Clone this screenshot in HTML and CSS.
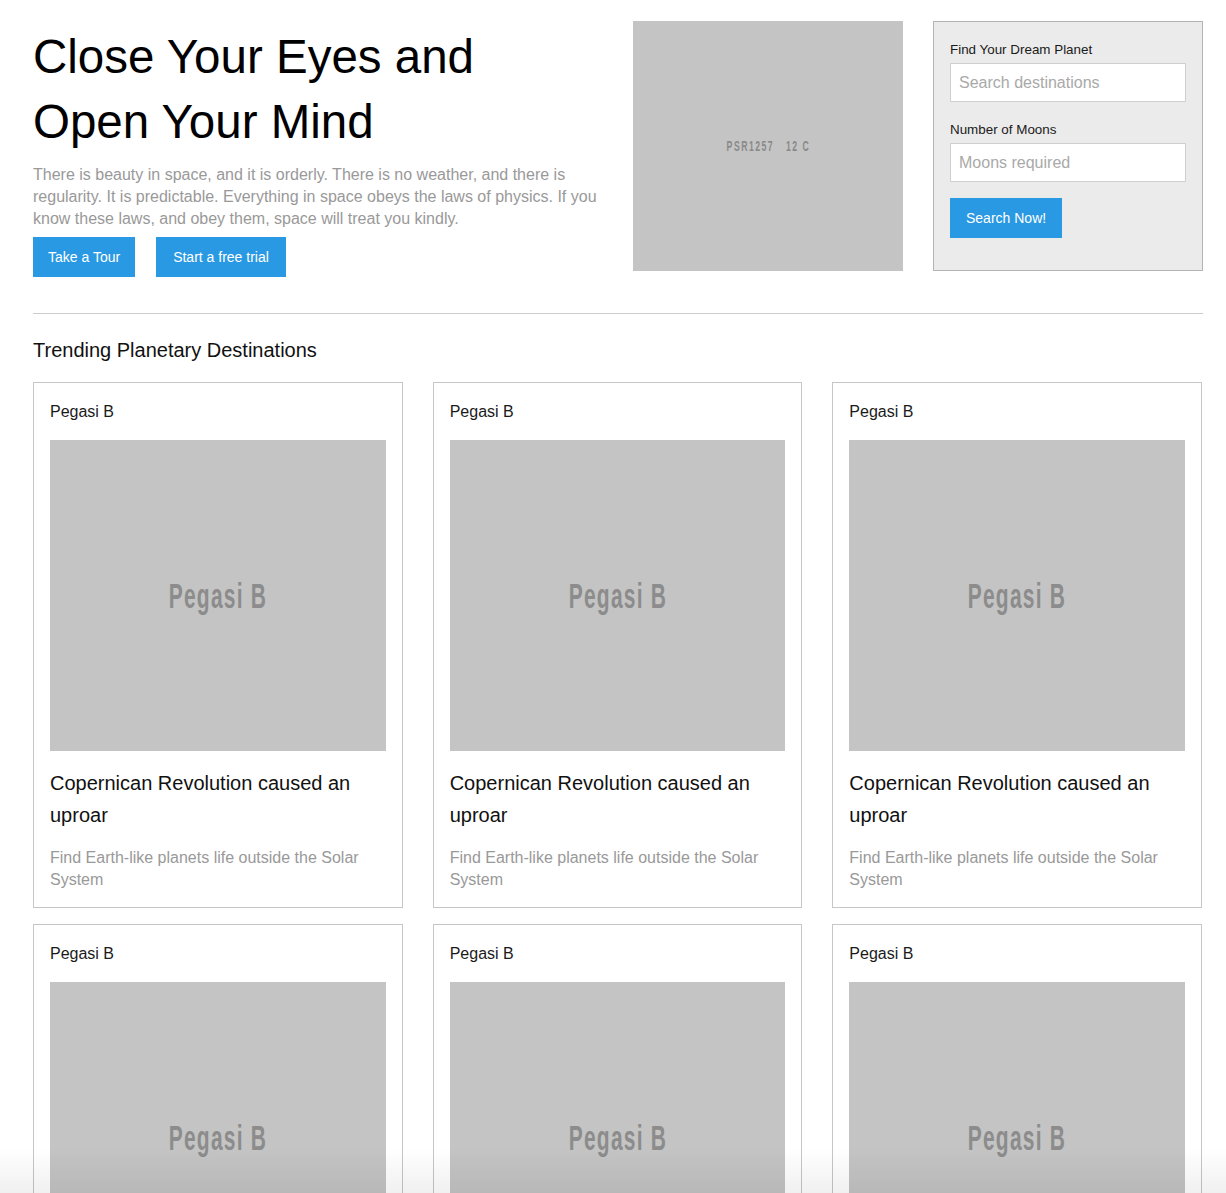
FILE: index.html
```html
<!DOCTYPE html>
<html lang="en">
<head>
<meta charset="utf-8">
<title>Close Your Eyes and Open Your Mind</title>
<link rel="stylesheet" href="styles.css">
</head>
<body>
<div class="page">
  <section class="hero">
    <div class="intro">
      <h1 class="hero-title">Close Your Eyes and<br>Open Your Mind</h1>
      <p class="hero-text">There is beauty in space, and it is orderly. There is no weather, and there is regularity. It is predictable. Everything in space obeys the laws of physics. If you know these laws, and obey them, space will treat you kindly.</p>
      <div class="actions">
        <a class="btn" href="#">Take a Tour</a>
        <a class="btn" href="#">Start a free trial</a>
      </div>
    </div>
    <div class="ph ph-hero"><span class="ph-label ph-label-small">PSR1257&nbsp;&nbsp;&nbsp;12 C</span></div>
    <form class="search">
      <label class="field-label" for="dest">Find Your Dream Planet</label>
      <input class="field" id="dest" type="text" placeholder="Search destinations">
      <label class="field-label" for="moons">Number of Moons</label>
      <input class="field field-last" id="moons" type="text" placeholder="Moons required">
      <button class="btn btn-search" type="button">Search Now!</button>
    </form>
  </section>

  <hr class="divider">

  <h2 class="section-title">Trending Planetary Destinations</h2>

  <div class="cards">
    <article class="card">
      <div class="card-name">Pegasi B</div>
      <div class="ph ph-card"><span class="ph-label">Pegasi B</span></div>
      <h3 class="card-title">Copernican Revolution caused an uproar</h3>
      <p class="card-text">Find Earth-like planets life outside the Solar System</p>
    </article>
    <article class="card">
      <div class="card-name">Pegasi B</div>
      <div class="ph ph-card"><span class="ph-label">Pegasi B</span></div>
      <h3 class="card-title">Copernican Revolution caused an uproar</h3>
      <p class="card-text">Find Earth-like planets life outside the Solar System</p>
    </article>
    <article class="card">
      <div class="card-name">Pegasi B</div>
      <div class="ph ph-card"><span class="ph-label">Pegasi B</span></div>
      <h3 class="card-title">Copernican Revolution caused an uproar</h3>
      <p class="card-text">Find Earth-like planets life outside the Solar System</p>
    </article>
    <article class="card">
      <div class="card-name">Pegasi B</div>
      <div class="ph ph-card"><span class="ph-label">Pegasi B</span></div>
      <h3 class="card-title">Copernican Revolution caused an uproar</h3>
      <p class="card-text">Find Earth-like planets life outside the Solar System</p>
    </article>
    <article class="card">
      <div class="card-name">Pegasi B</div>
      <div class="ph ph-card"><span class="ph-label">Pegasi B</span></div>
      <h3 class="card-title">Copernican Revolution caused an uproar</h3>
      <p class="card-text">Find Earth-like planets life outside the Solar System</p>
    </article>
    <article class="card">
      <div class="card-name">Pegasi B</div>
      <div class="ph ph-card"><span class="ph-label">Pegasi B</span></div>
      <h3 class="card-title">Copernican Revolution caused an uproar</h3>
      <p class="card-text">Find Earth-like planets life outside the Solar System</p>
    </article>
  </div>
</div>
<div class="fade"></div>
</body>
</html>
```

FILE: styles.css
```css
* { box-sizing: border-box; }

html, body {
  margin: 0;
  padding: 0;
  background: #fff;
}

body {
  font-family: "Liberation Sans", Arial, Helvetica, sans-serif;
  color: #111;
}

.page {
  width: 1170px;
  margin-left: 33px;
  padding-top: 21px;
}

.hero {
  display: grid;
  grid-template-columns: 570px 270px 270px;
  column-gap: 30px;
  align-items: start;
}

.hero-title {
  margin: 3px 0 0;
  font-size: 47.5px;
  line-height: 65px;
  font-weight: normal;
  color: #000;
}

.hero-text {
  margin: 10px 0 0;
  width: 576px;
  font-size: 16px;
  line-height: 22px;
  color: #999;
}

.actions {
  display: flex;
  gap: 21px;
  margin-top: 7px;
}

.btn {
  display: inline-flex;
  align-items: center;
  justify-content: center;
  height: 40px;
  padding: 0 15px;
  background: #2a99e3;
  color: #fff;
  font-family: inherit;
  font-size: 14px;
  text-decoration: none;
  border: 0;
  cursor: pointer;
}

.actions .btn + .btn {
  padding: 0 17px;
}

.ph {
  display: flex;
  align-items: center;
  justify-content: center;
  background: #c4c4c4;
  overflow: hidden;
}

.ph-hero {
  height: 250px;
}

.ph-label {
  display: inline-block;
  font-family: "Liberation Sans", Arial, sans-serif;
  font-size: 35px;
  font-weight: bold;
  color: #8c8c8c;
  letter-spacing: 2px;
  transform: scaleX(0.6);
  white-space: nowrap;
}

.ph-label-small {
  font-size: 14px;
  font-weight: bold;
  letter-spacing: 2.4px;
  color: #8a8a8a;
  transform: scaleX(0.62);
}

.search {
  display: flex;
  flex-direction: column;
  align-items: flex-start;
  height: 250px;
  margin: 0;
  padding: 20px 16px 0;
  background: #ebebeb;
  border: 1px solid #b4b4b4;
}

.field-label {
  font-size: 13.4px;
  line-height: 16px;
  color: #1a1a1a;
}

.field {
  width: 100%;
  height: 39px;
  margin: 5px 0 20px;
  padding: 0 8px;
  border: 1px solid #cfcfcf;
  background: #fff;
  font-family: inherit;
  font-size: 16px;
  color: #333;
  outline: none;
}

.field::placeholder {
  color: #a9a9a9;
}

.field-last {
  margin-bottom: 16px;
}

.btn-search {
  padding: 0 16px;
}

.divider {
  margin: 36px 0 0;
  border: 0;
  border-top: 1px solid #cccccc;
  height: 0;
}

.section-title {
  margin: 24px 0 20px;
  font-size: 20px;
  line-height: 24px;
  font-weight: normal;
  color: #111;
}

.cards {
  display: grid;
  grid-template-columns: repeat(3, 1fr);
  gap: 16px 30px;
  margin-right: 1px;
}

.card {
  border: 1px solid #c6c6c6;
  padding: 17px 16px 16px;
}

.card-name {
  font-size: 16px;
  line-height: 24px;
  color: #1a1a1a;
}

.ph-card {
  height: 311px;
  margin-top: 16px;
}

.card-title {
  margin: 16px 0 0;
  font-size: 20px;
  line-height: 32px;
  font-weight: normal;
  color: #111;
}

.card-text {
  margin: 16px 0 0;
  font-size: 16px;
  line-height: 22px;
  color: #999;
}

.fade {
  position: fixed;
  left: 0;
  right: 0;
  bottom: 0;
  height: 44px;
  background: linear-gradient(to bottom, rgba(0,0,0,0), rgba(0,0,0,0.06));
  pointer-events: none;
}
```
